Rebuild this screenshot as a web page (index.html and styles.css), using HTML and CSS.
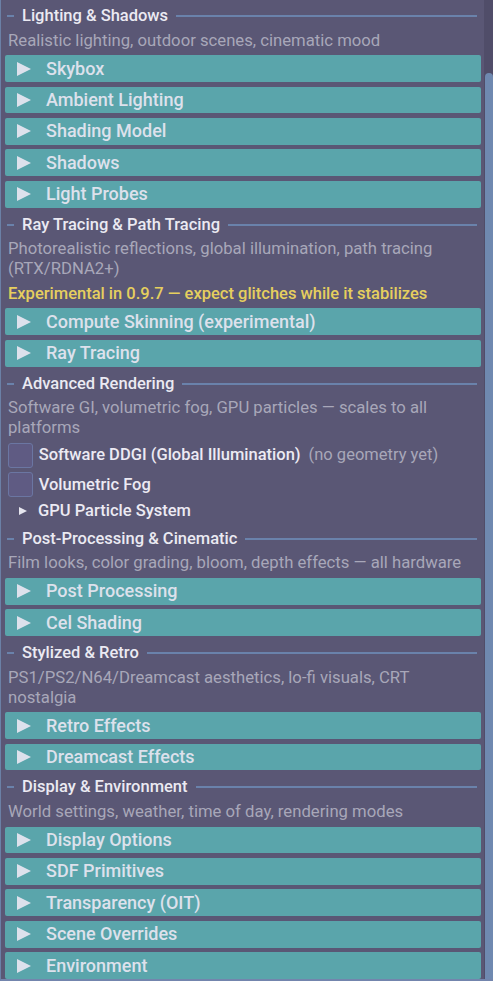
FILE: index.html
```html
<!DOCTYPE html>
<html>
<head>
<meta charset="utf-8">
<link rel="stylesheet" href="styles.css">
</head>
<body>
<div class="window">
  <div class="content">
    <div class="sep-title first"><span class="dash"></span><span class="sep-text">Lighting &amp; Shadows</span><span class="line"></span></div>
    <div class="desc">Realistic lighting, outdoor scenes, cinematic mood</div>
    <div class="header"><svg class="arrow" viewBox="0 0 14 14"><polygon points="0,0 14,7 0,14"/></svg><span>Skybox</span></div>
    <div class="header"><svg class="arrow" viewBox="0 0 14 14"><polygon points="0,0 14,7 0,14"/></svg><span>Ambient Lighting</span></div>
    <div class="header"><svg class="arrow" viewBox="0 0 14 14"><polygon points="0,0 14,7 0,14"/></svg><span>Shading Model</span></div>
    <div class="header"><svg class="arrow" viewBox="0 0 14 14"><polygon points="0,0 14,7 0,14"/></svg><span>Shadows</span></div>
    <div class="header"><svg class="arrow" viewBox="0 0 14 14"><polygon points="0,0 14,7 0,14"/></svg><span>Light Probes</span></div>

    <div class="sep-title"><span class="dash"></span><span class="sep-text">Ray Tracing &amp; Path Tracing</span><span class="line"></span></div>
    <div class="desc">Photorealistic reflections, global illumination, path tracing (RTX/RDNA2+)</div>
    <div class="warn">Experimental in 0.9.7 — expect glitches while it stabilizes</div>
    <div class="header"><svg class="arrow" viewBox="0 0 14 14"><polygon points="0,0 14,7 0,14"/></svg><span>Compute Skinning (experimental)</span></div>
    <div class="header"><svg class="arrow" viewBox="0 0 14 14"><polygon points="0,0 14,7 0,14"/></svg><span>Ray Tracing</span></div>

    <div class="sep-title"><span class="dash"></span><span class="sep-text">Advanced Rendering</span><span class="line"></span></div>
    <div class="desc">Software GI, volumetric fog, GPU particles — scales to all platforms</div>
    <div class="check-row"><span class="box"></span><span class="check-label">Software DDGI (Global Illumination)</span><span class="hint">(no geometry yet)</span></div>
    <div class="check-row"><span class="box"></span><span class="check-label">Volumetric Fog</span></div>
    <div class="tree-node"><svg class="small-arrow" viewBox="0 0 8 8"><polygon points="0,0 8,4 0,8"/></svg><span>GPU Particle System</span></div>

    <div class="sep-title"><span class="dash"></span><span class="sep-text">Post-Processing &amp; Cinematic</span><span class="line"></span></div>
    <div class="desc">Film looks, color grading, bloom, depth effects — all hardware</div>
    <div class="header"><svg class="arrow" viewBox="0 0 14 14"><polygon points="0,0 14,7 0,14"/></svg><span>Post Processing</span></div>
    <div class="header"><svg class="arrow" viewBox="0 0 14 14"><polygon points="0,0 14,7 0,14"/></svg><span>Cel Shading</span></div>

    <div class="sep-title"><span class="dash"></span><span class="sep-text">Stylized &amp; Retro</span><span class="line"></span></div>
    <div class="desc">PS1/PS2/N64/Dreamcast aesthetics, lo-fi visuals, CRT nostalgia</div>
    <div class="header"><svg class="arrow" viewBox="0 0 14 14"><polygon points="0,0 14,7 0,14"/></svg><span>Retro Effects</span></div>
    <div class="header"><svg class="arrow" viewBox="0 0 14 14"><polygon points="0,0 14,7 0,14"/></svg><span>Dreamcast Effects</span></div>

    <div class="sep-title"><span class="dash"></span><span class="sep-text">Display &amp; Environment</span><span class="line"></span></div>
    <div class="desc">World settings, weather, time of day, rendering modes</div>
    <div class="header"><svg class="arrow" viewBox="0 0 14 14"><polygon points="0,0 14,7 0,14"/></svg><span>Display Options</span></div>
    <div class="header"><svg class="arrow" viewBox="0 0 14 14"><polygon points="0,0 14,7 0,14"/></svg><span>SDF Primitives</span></div>
    <div class="header"><svg class="arrow" viewBox="0 0 14 14"><polygon points="0,0 14,7 0,14"/></svg><span>Transparency (OIT)</span></div>
    <div class="header"><svg class="arrow" viewBox="0 0 14 14"><polygon points="0,0 14,7 0,14"/></svg><span>Scene Overrides</span></div>
    <div class="header"><svg class="arrow" viewBox="0 0 14 14"><polygon points="0,0 14,7 0,14"/></svg><span>Environment</span></div>
  </div>
  <div class="scrollbar"><div class="thumb"></div></div>
</div>
</body>
</html>
```

FILE: styles.css
```css
html, body {
  margin: 0;
  padding: 0;
  background: #5a5775;
  overflow: hidden;
}

body {
  font-family: Roboto, "Noto Sans", "Liberation Sans", sans-serif;
  font-size: 16.5px;
  line-height: 20px;
  color: #e9e8f0;
}

.window {
  box-sizing: border-box;
  width: 493px;
  height: 981px;
  display: flex;
  border-left: 1px solid #6b80a6;
  border-bottom: 2px solid #7385ad;
  overflow: hidden;
}

.content {
  flex: 1;
  display: flex;
  flex-direction: column;
  gap: 4.6px;
  padding: 4px 3px 0 4px;
  min-width: 0;
}

.sep-title {
  display: flex;
  align-items: center;
  margin-top: 2.5px;
  margin-left: 2px;
  margin-right: 4px;
  height: 20px;
  flex: none;
  font-weight: 500;
  color: #ebeaf2;
}

.sep-title.first {
  margin-top: 2px;
}

.dash {
  width: 7px;
  height: 2px;
  background: #6a82ab;
  margin-right: 8px;
  flex: none;
}

.sep-text {
  flex: none;
}

.line {
  flex: 1;
  height: 2px;
  background: #6a82ab;
  margin-left: 8px;
}

.desc {
  margin-left: 3px;
  margin-right: 4px;
  font-size: 16.7px;
  color: #a8a7b9;
}

.warn {
  margin-left: 3px;
  color: #e6cf5e;
  font-weight: 500;
}

.header {
  height: 26.8px;
  flex: none;
  display: flex;
  align-items: center;
  background: #5aa5ab;
  border-radius: 2px;
  padding-left: 12px;
  color: #dde1ec;
  font-size: 18px;
  font-weight: 500;
}

.arrow {
  width: 14px;
  height: 14px;
  fill: #dde1ec;
  margin-right: 15px;
  flex: none;
}

.check-row {
  height: 24.7px;
  flex: none;
  display: flex;
  align-items: center;
  margin-left: 3px;
}

.box {
  box-sizing: border-box;
  width: 24.7px;
  height: 24.7px;
  background: #5f5b83;
  border: 1px solid #6b76a2;
  border-radius: 3px;
  margin-right: 6px;
  flex: none;
}

.check-label {
  font-weight: 500;
  color: #eceaf3;
}

.hint {
  margin-left: 8px;
  color: #a8a7b9;
}

.tree-node {
  display: flex;
  align-items: center;
  margin-left: 14px;
  height: 20px;
  flex: none;
  font-weight: 500;
  color: #eceaf3;
}

.small-arrow {
  width: 8px;
  height: 8px;
  fill: #e6e6ef;
  margin-right: 11px;
  flex: none;
}

.scrollbar {
  width: 9px;
  flex: none;
  background: #504d69;
  display: flex;
  flex-direction: column;
  padding-top: 73px;
}

.thumb {
  flex: 1;
  margin-left: 1px;
  background: #6f89b0;
  border-radius: 4px 4px 0 0;
}
```
